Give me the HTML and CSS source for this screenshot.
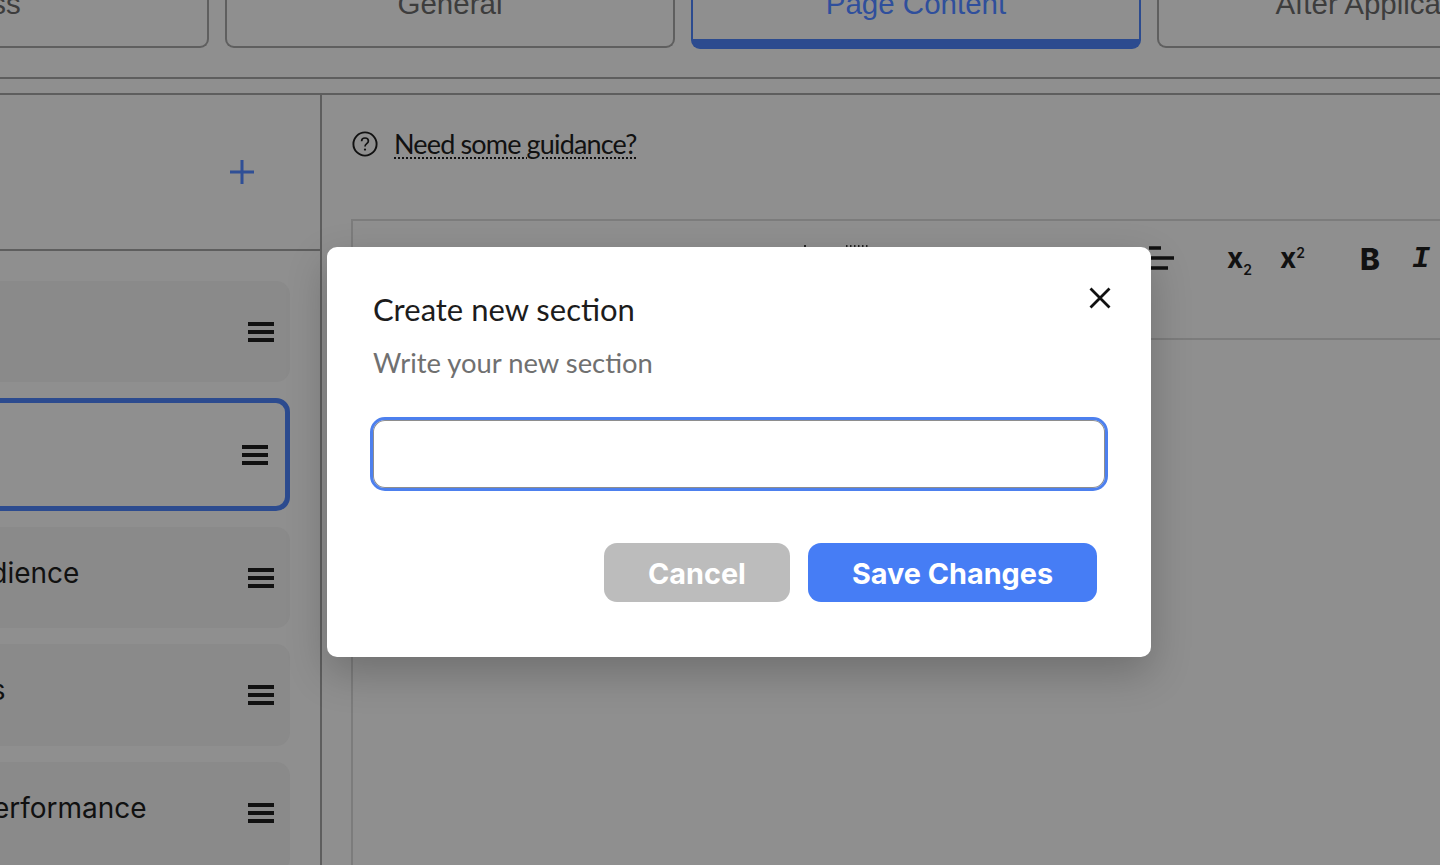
FILE: index.html
```html
<!DOCTYPE html>
<html lang="en">
<head>
<meta charset="utf-8">
<title>Create new section</title>
<link rel="stylesheet" href="styles.css">
</head>
<body>
<div class="app">
  <nav class="tabs">
    <div class="tab"><span class="tab-label">Class</span></div>
    <div class="tab"><span class="tab-label">General</span></div>
    <div class="tab tab-active"><span class="tab-label">Page Content</span></div>
    <div class="tab"><span class="tab-label">After Application</span></div>
  </nav>
  <hr class="rule rule-first">
  <hr class="rule rule-second">
  <main class="main">
    <aside class="sidebar">
      <div class="side-head">
        <svg class="plus" viewBox="0 0 24 24" width="24" height="24"><path d="M12 0v24M0 12h24" stroke="#2f4f96" stroke-width="3" fill="none"/></svg>
      </div>
      <div class="cards">
        <div class="card"><span class="card-label">Intro</span><svg class="burger" viewBox="0 0 26 20" width="26" height="20"><path d="M0 2h26M0 10h26M0 18h26" stroke="#111" stroke-width="3.8"/></svg></div>
        <div class="card card-active"><span class="card-label">About</span><svg class="burger" viewBox="0 0 26 20" width="26" height="20"><path d="M0 2h26M0 10h26M0 18h26" stroke="#111" stroke-width="3.8"/></svg></div>
        <div class="card"><span class="card-label">Our Audience</span><svg class="burger" viewBox="0 0 26 20" width="26" height="20"><path d="M0 2h26M0 10h26M0 18h26" stroke="#111" stroke-width="3.8"/></svg></div>
        <div class="card"><span class="card-label">Projects</span><svg class="burger" viewBox="0 0 26 20" width="26" height="20"><path d="M0 2h26M0 10h26M0 18h26" stroke="#111" stroke-width="3.8"/></svg></div>
        <div class="card"><span class="card-label">Work Performance</span><svg class="burger" viewBox="0 0 26 20" width="26" height="20"><path d="M0 2h26M0 10h26M0 18h26" stroke="#111" stroke-width="3.8"/></svg></div>
      </div>
    </aside>
    <section class="content">
      <div class="guidance">
        <svg class="help" viewBox="0 0 26 26" width="26" height="26"><circle cx="13" cy="13" r="11.6" fill="none" stroke="#111" stroke-width="1.9"/><path d="M9.6 10.2c0-2 1.5-3.2 3.4-3.2s3.4 1.2 3.4 3c0 2.6-3.4 2.6-3.4 5.4" fill="none" stroke="#111" stroke-width="1.7"/><circle cx="13" cy="18.6" r="1.1" fill="#111"/></svg>
        <span class="guidance-link">Need some guidance?</span>
      </div>
      <div class="editor">
        <div class="toolbar">
          <svg class="tool-hidden" viewBox="0 0 66 4" width="66" height="4"><path d="M0 1h2v2H0zM42 1h1.5v2H42zM46 1h1.5v2H46zM50 1h1.5v2H50zM54 1h1.5v2H54zM58 1h1.5v2H58zM62 1h1.5v2H62z" fill="#222"/></svg>
          <svg class="tool-align" viewBox="0 0 25 24" width="25" height="24"><path d="M0 2h12M0 12h25M0 22h19" stroke="#111" stroke-width="3.6"/></svg>
          <span class="tool-script tool-sub">x<sub>2</sub></span>
          <span class="tool-script tool-sup">x<sup>2</sup></span>
          <span class="tool-bold">B</span>
          <span class="tool-italic">I</span>
        </div>
      </div>
    </section>
  </main>
</div>
<div class="modal">
  <svg class="close" viewBox="0 0 22 22" width="22" height="22"><path d="M1.5 1.5l19 19M20.5 1.5l-19 19" stroke="#111" stroke-width="2.8" fill="none"/></svg>
  <h2 class="modal-title">Create new section</h2>
  <p class="modal-sub">Write your new section</p>
  <div class="field"></div>
  <div class="actions">
    <button class="btn btn-cancel">Cancel</button>
    <button class="btn btn-save">Save Changes</button>
  </div>
</div>
</body>
</html>
```
FILE: styles.css
```css
* { box-sizing: border-box; }
html, body { margin: 0; height: 865px; overflow: hidden; background: #8f8f8f; }
body { font-family: Inter, "Liberation Sans", sans-serif; color: #111; }
.app { width: 1440px; height: 865px; overflow: hidden; }

.tabs { display: flex; gap: 16px; margin: -32px 0 0 -241px; height: 80px; }
.tab { flex: 0 0 450px; height: 80px; border: 2px solid #5f5f5f; border-top: 0; border-radius: 0 0 9px 9px; display: flex; justify-content: center; font-family: "Liberation Sans", sans-serif; font-size: 29.5px; color: #3d3d3d; line-height: 71px; white-space: nowrap; }
.tab-active { border-color: #2c4b8f; border-bottom-width: 10px; height: 81px; color: #2f4f9c; }

.rule { border: 0; height: 2px; background: #5e5e5e; margin: 0; }
.rule-first { margin-top: 29px; }
.rule-second { margin-top: 14px; }

.main { display: flex; height: 771px; }
.sidebar { border-right: 2px solid #5e5e5e; display: flex; flex-direction: column; margin-left: -120px; flex: 0 0 442px; }
.side-head { height: 156px; min-height: 156px; border-bottom: 2px solid #5e5e5e; padding: 65px 66px 0 0; display: flex; justify-content: flex-end; align-items: flex-start; }
.plus { display: block; }
.cards { padding: 30px 30px 0 0; display: flex; flex-direction: column; gap: 16px; }
.card { height: 101px; flex: none; background: #8a8a8a; border-radius: 14px; display: flex; justify-content: space-between; align-items: center; padding: 0 16px 0 18px; }
.card:nth-child(4) { height: 102px; }
.card:nth-child(5) { height: 110px; }
.card-label { font-size: 28px; line-height: 34px; margin-bottom: 10px; white-space: nowrap; }
.card:nth-child(5) .card-label { margin-bottom: 18px; }
.card:nth-child(5) .burger { margin-bottom: 8px; }
.card-active { height: 113px; background: transparent; border: 5px solid #2c4b8f; padding-right: 17px; }
.burger { display: block; flex: none; }

.content { flex: 1; padding: 35px 0 0 29px; min-width: 0; }
.guidance { display: flex; align-items: center; gap: 16px; height: 28px; margin-left: 1px; }
.help { display: block; flex: none; }
.guidance-link { font-family: Lato, sans-serif; font-size: 27px; letter-spacing: -.85px; line-height: 34px; text-decoration: underline dotted 2px; text-underline-offset: 3px; color: #111; white-space: nowrap; }
.editor { margin-top: 61px; border: 2px solid #7c7c7c; border-bottom: 0; height: 700px; width: 1200px; }
.toolbar { height: 119px; border-bottom: 2px solid #7c7c7c; display: flex; align-items: flex-start; padding: 23px 0 0 451px; }
.tool-hidden { display: block; }
.tool-align { display: block; margin-left: 279px; margin-top: 2px; }
.tool-script { font-size: 28px; font-weight: 700; line-height: 30px; color: #111; margin-top: -1px; }
.tool-script sub, .tool-script sup { font-size: 14px; font-weight: 600; line-height: 0; }
.tool-sub { margin-left: 53px; }
.tool-sup { margin-left: 28px; }
.tool-bold { font-size: 30px; font-weight: 800; line-height: 30px; margin-left: 55px; }
.tool-italic { font-family: "Liberation Mono", monospace; font-style: italic; font-weight: 700; font-size: 30px; line-height: 30px; margin-left: 32px; }

.modal { position: absolute; left: 327px; top: 247px; width: 824px; height: 410px; background: #fff; border-radius: 10px; padding: 43px 43px 0 46px; box-shadow: 0 16px 40px rgba(0,0,0,.22); display: flex; flex-direction: column; }
.close { position: absolute; top: 40px; right: 40px; }
.modal-title { margin: 0; font-family: Lato, sans-serif; font-weight: 400; font-size: 31px; line-height: 38px; color: #1c1c1c; }
.modal-sub { margin: 18px 0 0; font-family: Lato, sans-serif; font-size: 27.4px; line-height: 34px; color: #707070; }
.field { margin: 37px 0 0 -3px; width: 738px; height: 74px; border: 3px solid #4d80ee; border-radius: 15px; box-shadow: inset 0 0 0 1px #8e8e8e; background: #fff; }
.actions { margin-top: 52px; display: flex; gap: 18px; justify-content: flex-end; padding-right: 11px; }
.btn { height: 59px; border: 0; border-radius: 13px; color: #fff; font-family: Inter, "Liberation Sans", sans-serif; font-weight: 700; font-size: 28.8px; padding: 1px 0 0; }
.btn-cancel { width: 186px; background: #bcbcbc; }
.btn-save { width: 289px; background: #467df5; }
```
